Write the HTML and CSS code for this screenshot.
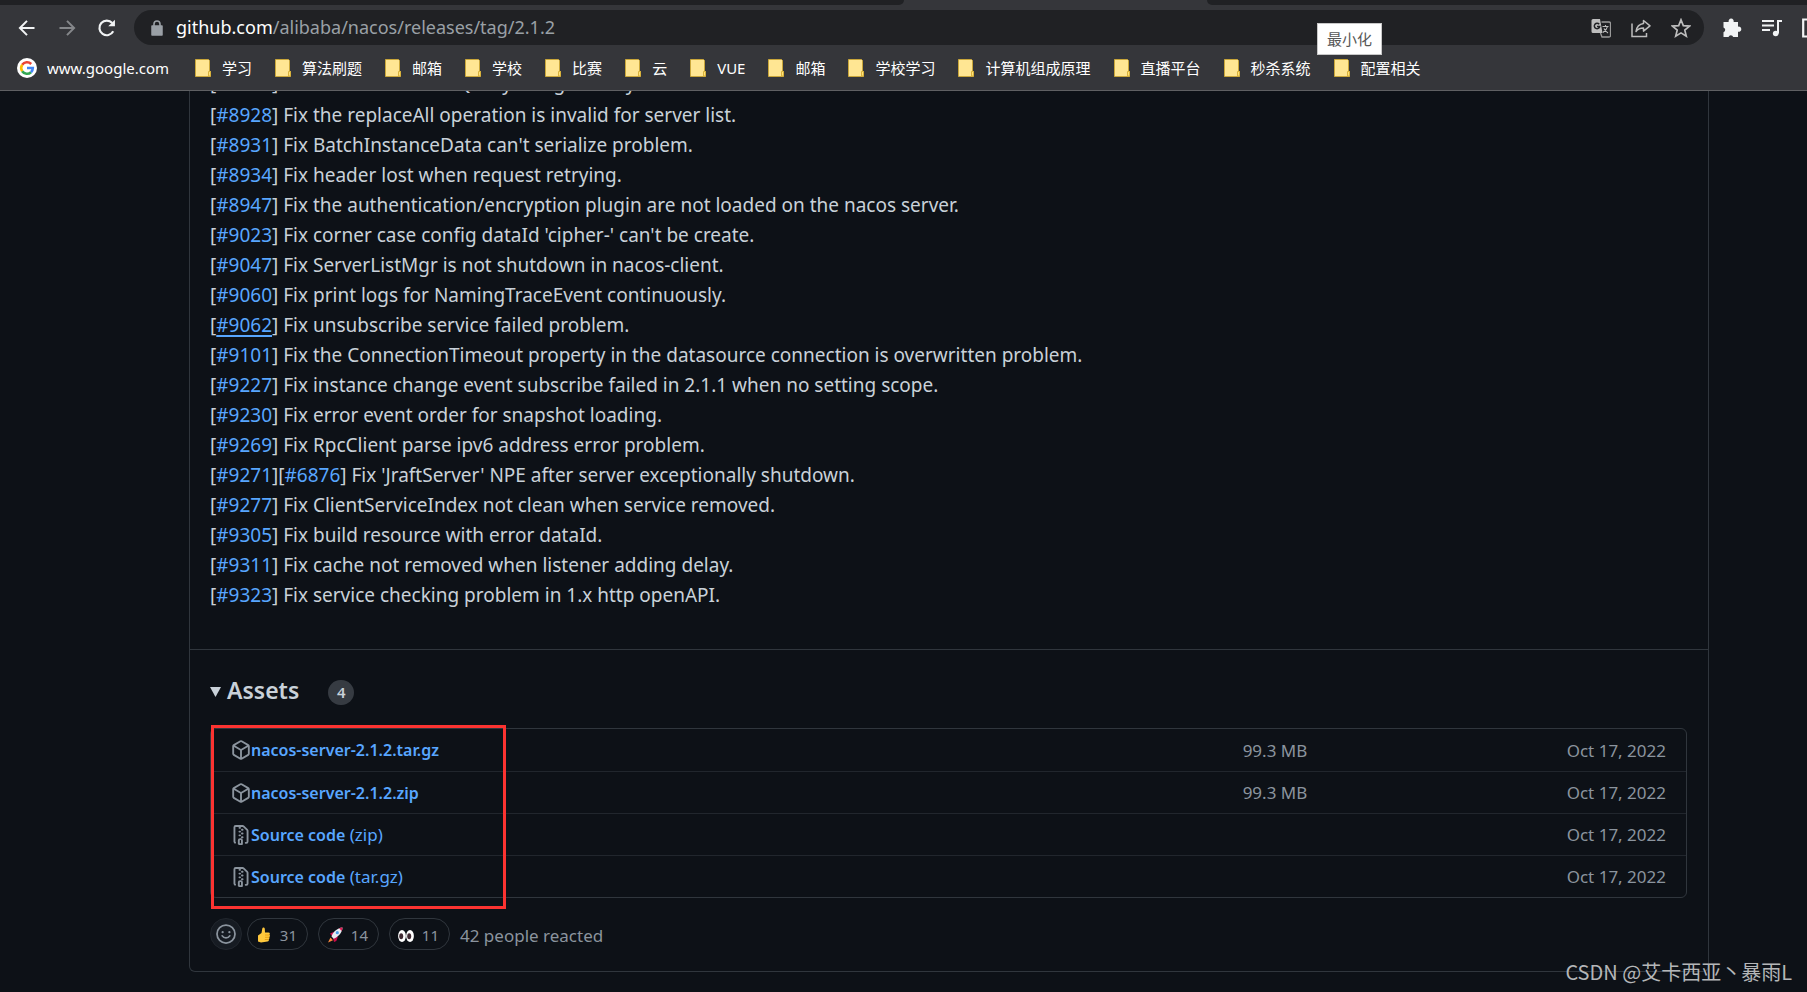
FILE: index.html
```
<!DOCTYPE html>
<html lang="zh-CN">
<head>
<meta charset="utf-8">
<title>Release 2.1.2 · alibaba/nacos</title>
<link rel="stylesheet" href="styles.css">
</head>
<body>
<svg class="defs" aria-hidden="true">
  <symbol id="folder" viewBox="0 0 16 18"><path d="M.5.5h13l1 1v11h1v5H.5z" fill="#ffe693" stroke="#c9a63a"/><path d="M13.500 17v-4.500h2V17z" fill="#ffe27a" stroke="#d9b23c"/></symbol>
  <symbol id="package" viewBox="0 0 16 16"><path fill-rule="evenodd" d="M8.878.392a1.750 1.750 0 00-1.756 0l-5.250 3.045A1.750 1.750 0 001 4.951v6.098c0 .624.332 1.200.872 1.514l5.250 3.045a1.750 1.750 0 001.756 0l5.250-3.045c.54-.313.872-.89.872-1.514V4.951c0-.624-.332-1.200-.872-1.514L8.878.392zM7.875 1.690a.25.25 0 01.25 0l4.630 2.685L8 7.133 3.245 4.375l4.630-2.685zM2.500 5.677v5.372c0 .09.047.171.125.216l4.625 2.683V8.432L2.500 5.677zm6.250 8.271l4.625-2.683a.25.25 0 00.125-.216V5.677L8.750 8.432v5.516z"/></symbol>
  <symbol id="zip" viewBox="0 0 16 16"><path fill-rule="evenodd" d="M3.500 1.750a.25.25 0 01.25-.25h3a.75.75 0 000 1.500h.5a.75.75 0 000-1.500h2.086a.25.25 0 01.177.073l2.914 2.914a.25.25 0 01.073.177v8.586a.25.25 0 01-.25.25h-.5a.75.75 0 000 1.500h.5A1.750 1.750 0 0014 13.250V4.664c0-.464-.184-.909-.513-1.237L10.573.513A1.750 1.750 0 009.336 0H3.750A1.750 1.750 0 002 1.750v11.500c0 .649.353 1.214.874 1.515a.75.75 0 10.752-1.298.25.25 0 01-.126-.217V1.750zM8.750 3a.75.75 0 000 1.500h.5a.75.75 0 000-1.500h-.5zM6 5.250a.75.75 0 01.75-.75h.5a.75.75 0 010 1.500h-.5A.75.75 0 016 5.250zm2 1.500A.75.75 0 018.750 6h.5a.75.75 0 010 1.500h-.5A.75.75 0 018 6.750zm-1.250.75a.75.75 0 000 1.500h.5a.75.75 0 000-1.500h-.5zM8 9.750A.75.75 0 018.750 9h.5a.75.75 0 010 1.500h-.5A.75.75 0 018 9.750zm-.75.75a1.750 1.750 0 00-1.750 1.750v3c0 .414.336.75.75.75h2.500a.75.75 0 00.75-.75v-3a1.750 1.750 0 00-1.750-1.750h-.5zM7 12.250a.25.25 0 01.25-.25h.5a.25.25 0 01.25.25v2.250H7v-2.250z"/></symbol>
</svg>

<header class="browser">
  <div class="tabs"><span class="tab-left"></span><span class="tab-right"></span></div>
  <div class="toolbar">
    <button class="nav" aria-label="Back"><svg viewBox="0 0 24 24" fill="none" stroke="#f1f3f4" stroke-width="2.400"><path d="M21 12H4M12 3.500 3.500 12l8.500 8.500"/></svg></button>
    <button class="nav" aria-label="Forward"><svg viewBox="0 0 24 24" fill="none" stroke="#85878a" stroke-width="2.400"><path d="M3 12h17M12 3.500l8.500 8.500-8.500 8.500"/></svg></button>
    <button class="nav" aria-label="Reload"><svg viewBox="0 0 24 24" fill="none" stroke="#f1f3f4" stroke-width="2.600"><path d="M19.500 16A8.800 8.800 0 1 1 18.300 6"/><path d="M21.500 2v8h-8z" fill="#f1f3f4" stroke="none"/></svg></button>
    <div class="omnibox">
      <svg class="lock" viewBox="0 0 12 16"><path d="M1 6h10v9H1z" fill="#9aa0a6" stroke="#9aa0a6" stroke-linejoin="round" stroke-width="1.500"/><path d="M3 6V4a3 3 0 0 1 6 0v2" fill="none" stroke="#9aa0a6" stroke-width="1.600"/></svg>
      <span class="url"><span class="host">github.com</span>/alibaba/nacos/releases/tag/2.1.2</span>
      <button class="tool" aria-label="Translate"><svg viewBox="0 0 20 20"><path d="M2 1h7l2.500 14H2a1.500 1.500 0 0 1-1.500-1.500v-11A1.500 1.500 0 0 1 2 1z" fill="#bdbdbd"/><path d="M10.500 4H18a1.500 1.500 0 0 1 1.500 1.500v12A1.500 1.500 0 0 1 18 19h-7l-1.500-4" fill="none" stroke="#9a9a9a" stroke-width="1.300"/><path d="M8.200 6.300a2.700 2.700 0 1 0 .5 2.200H6" fill="none" stroke="#202124" stroke-width="1.500"/><path d="M11.500 8.500h6M14.500 7v1.500m2 0c-.5 2.500-2.500 4.500-4.500 6m1-4c1 2 2.500 3.500 4 4.500" fill="none" stroke="#bdbdbd" stroke-width="1.100"/></svg></button>
      <button class="tool" aria-label="Share"><svg viewBox="0 0 20 20" fill="none" stroke="#bdbdbd" stroke-width="1.500"><path d="M1 5.500v13h14.500V15"/><path d="M12.500 2.500 19 7.800l-6.500 5.300v-3c-3.500 0-5.700 1-7.500 3.400.7-4.500 3-7.300 7.500-7.900z" stroke-linejoin="round"/></svg></button>
      <button class="tool" aria-label="Bookmark"><svg viewBox="0 0 20 20" fill="none" stroke="#bdbdbd" stroke-width="1.700"><path d="m10 1.800 2.300 5.800 6.200.5-4.700 4 1.500 6.100-5.300-3.300-5.300 3.300 1.500-6.100-4.700-4 6.200-.5z"/></svg></button>
    </div>
    <button class="tool" aria-label="Extensions"><svg viewBox="0 0 20 20" fill="#f1f3f4"><path d="M2.500 4h4.200a2.600 2.600 0 1 1 4.900 0H16v4.700a2.600 2.600 0 1 1 0 5V19h-4.800a2.500 2.500 0 0 0-4.700 0H1.500v-4.700a2.600 2.600 0 0 0 0-4.900V4z"/></svg></button>
    <button class="tool" aria-label="Media"><svg viewBox="0 0 20 20" fill="none" stroke="#f1f3f4" stroke-width="2"><path d="M0 3h12M0 7.500h12M0 12h8M16 15.500V3h4"/><circle cx="13.700" cy="15.500" r="2.800" fill="#f1f3f4" stroke="none"/></svg></button>
    <button class="tool" aria-label="Side panel"><svg viewBox="0 0 20 20" fill="none" stroke="#f1f3f4" stroke-width="2.200"><path d="M1.200 1.500h17.500v17H1.200z"/></svg></button>
  </div>
  <nav class="bookmarks">
    <a class="site" href="#"><svg class="google" viewBox="0 0 20 20"><circle cx="10" cy="10" r="10" fill="#fff"/><g fill="none" stroke-width="2.600"><path d="M5.200 6.800A5.800 5.800 0 0 1 14.200 6" stroke="#ea4335"/><path d="M5.200 13.200a5.800 5.800 0 0 1 0-6.400" stroke="#fbbc05"/><path d="M14 14.200a5.800 5.800 0 0 1-8.800-1" stroke="#34a853"/><path d="M10 10h5.800a5.800 5.800 0 0 1-1.800 4.200" stroke="#4285f4"/></g></svg>www.google.com</a>
    <a class="mark" href="#"><svg class="folder"><use href="#folder"/></svg>学习</a>
    <a class="mark" href="#"><svg class="folder"><use href="#folder"/></svg>算法刷题</a>
    <a class="mark" href="#"><svg class="folder"><use href="#folder"/></svg>邮箱</a>
    <a class="mark" href="#"><svg class="folder"><use href="#folder"/></svg>学校</a>
    <a class="mark" href="#"><svg class="folder"><use href="#folder"/></svg>比赛</a>
    <a class="mark" href="#"><svg class="folder"><use href="#folder"/></svg>云</a>
    <a class="mark" href="#"><svg class="folder"><use href="#folder"/></svg>VUE</a>
    <a class="mark" href="#"><svg class="folder"><use href="#folder"/></svg>邮箱</a>
    <a class="mark" href="#"><svg class="folder"><use href="#folder"/></svg>学校学习</a>
    <a class="mark" href="#"><svg class="folder"><use href="#folder"/></svg>计算机组成原理</a>
    <a class="mark" href="#"><svg class="folder"><use href="#folder"/></svg>直播平台</a>
    <a class="mark" href="#"><svg class="folder"><use href="#folder"/></svg>秒杀系统</a>
    <a class="mark" href="#"><svg class="folder"><use href="#folder"/></svg>配置相关</a>
  </nav>
  <div class="tip" role="tooltip">最小化</div>
</header>

<main class="page">
  <article class="release">
    <ul class="notes">
      <li>[<a href="#">#8922</a>] Fix failed to handle QueryString directly</li>
      <li>[<a href="#">#8928</a>] Fix the replaceAll operation is invalid for server list.</li>
      <li>[<a href="#">#8931</a>] Fix BatchInstanceData can't serialize problem.</li>
      <li>[<a href="#">#8934</a>] Fix header lost when request retrying.</li>
      <li>[<a href="#">#8947</a>] Fix the authentication/encryption plugin are not loaded on the nacos server.</li>
      <li>[<a href="#">#9023</a>] Fix corner case config dataId 'cipher-' can't be create.</li>
      <li>[<a href="#">#9047</a>] Fix ServerListMgr is not shutdown in nacos-client.</li>
      <li>[<a href="#">#9060</a>] Fix print logs for NamingTraceEvent continuously.</li>
      <li>[<a class="active" href="#">#9062</a>] Fix unsubscribe service failed problem.</li>
      <li>[<a href="#">#9101</a>] Fix the ConnectionTimeout property in the datasource connection is overwritten problem.</li>
      <li>[<a href="#">#9227</a>] Fix instance change event subscribe failed in 2.1.1 when no setting scope.</li>
      <li>[<a href="#">#9230</a>] Fix error event order for snapshot loading.</li>
      <li>[<a href="#">#9269</a>] Fix RpcClient parse ipv6 address error problem.</li>
      <li>[<a href="#">#9271</a>][<a href="#">#6876</a>] Fix 'JraftServer' NPE after server exceptionally shutdown.</li>
      <li>[<a href="#">#9277</a>] Fix ClientServiceIndex not clean when service removed.</li>
      <li>[<a href="#">#9305</a>] Fix build resource with error dataId.</li>
      <li>[<a href="#">#9311</a>] Fix cache not removed when listener adding delay.</li>
      <li>[<a href="#">#9323</a>] Fix service checking problem in 1.x http openAPI.</li>
    </ul>
    <section class="assets">
      <h3 class="assets-head"><span class="caret"></span>Assets<span class="count">4</span></h3>
      <div class="asset-wrap">
        <ul class="asset-list">
          <li class="asset"><a href="#"><svg class="icon"><use href="#package"/></svg><b>nacos-server-2.1.2.tar.gz</b></a><span>99.3 MB</span><time>Oct 17, 2022</time></li>
          <li class="asset"><a href="#"><svg class="icon"><use href="#package"/></svg><b>nacos-server-2.1.2.zip</b></a><span>99.3 MB</span><time>Oct 17, 2022</time></li>
          <li class="asset"><a href="#"><svg class="icon"><use href="#zip"/></svg><b>Source code</b>&nbsp;(zip)</a><span></span><time>Oct 17, 2022</time></li>
          <li class="asset"><a href="#"><svg class="icon"><use href="#zip"/></svg><b>Source code</b>&nbsp;(tar.gz)</a><span></span><time>Oct 17, 2022</time></li>
        </ul>
        <div class="highlight"></div>
      </div>
      <div class="reactions">
        <button class="smiley" aria-label="Add reaction"><svg viewBox="0 0 16 16" fill="none" stroke="#8b949e" stroke-width="1.400"><circle cx="8" cy="8" r="7.200"/><path d="M5 9.500c1.300 2.200 4.700 2.200 6 0" stroke-linecap="round"/><circle cx="5.300" cy="6.500" r=".9" fill="#8b949e" stroke="none"/><circle cx="10.700" cy="6.500" r=".9" fill="#8b949e" stroke="none"/></svg></button>
        <button class="pill" aria-label="Thumbs up"><svg viewBox="0 0 16 16"><path d="M2 8.500 5.500 6 6.300 1.500C6.500.3 8.500.2 8.800 1.800L9 5.500h3.500c1.500 0 1.800 1.800.8 2.300 1 .5.800 2-.2 2.300.8.600.5 1.900-.4 2.200.5.800 0 2.200-1.200 2.200l-6.500 1-3-1z" fill="#ffc83d"/><path d="M9 8h4M9 10.300h4M8.800 12.500h3.500" stroke="#e08f00" stroke-width=".7"/></svg>31</button>
        <button class="pill" aria-label="Rocket"><svg viewBox="0 0 16 16"><path d="M3 6.500 6.500 5l4.300 5-1.500 4-2.300 1-1-4.500z" fill="#ca0b4a"/><path d="M4.500 9.500C6 5 10 1 15.500.5 15.300 6 11 10 6.700 11.700z" fill="#e8eaf0"/><path d="M12 1.200C13 .8 14.200.5 15.500.5c0 1.300-.3 2.500-.7 3.500z" fill="#e01d55"/><circle cx="10.300" cy="5.700" r="1.600" fill="#4e9ee8"/><path d="M3.500 10.500 1 15.500l5-2.300z" fill="#ff8a3d"/></svg>14</button>
        <button class="pill" aria-label="Eyes"><svg viewBox="0 0 16 16"><ellipse cx="4" cy="9" rx="3.900" ry="6" fill="#fff"/><ellipse cx="12" cy="9" rx="3.900" ry="6" fill="#fff"/><ellipse cx="3.200" cy="9.200" rx="2" ry="3" fill="#402a32"/><ellipse cx="11.200" cy="9.200" rx="2" ry="3" fill="#402a32"/></svg>11</button>
        <span class="people">42 people reacted</span>
      </div>
    </section>
  </article>
</main>
<div class="watermark">CSDN @艾卡西亚丶暴雨L</div>
</body>
</html>
```
FILE: styles.css
```
* { box-sizing: border-box; }
body {
  margin: 0;
  min-height: 100vh;
  display: flex;
  flex-direction: column;
  overflow-x: hidden;
  background: #0d1117;
  color: #c9d1d9;
  font-family: "Noto Sans", "Noto Sans CJK SC", sans-serif;
}
button { border: 0; padding: 0; background: none; font: inherit; color: inherit; }
a { color: #58a6ff; text-decoration: none; }
ul { list-style: none; margin: 0; padding: 0; }
svg { display: block; flex: none; }
.defs { position: absolute; width: 0; height: 0; }

.browser { position: relative; background: #35363a; border-bottom: 1px solid #5f6063; }
.tabs { display: flex; justify-content: space-between; height: 5px; }
.tab-left { width: 50%; background: #202124; border-bottom-right-radius: 8px; }
.tab-right { width: 33.2%; background: #202124; border-bottom-left-radius: 8px; }
.toolbar { display: flex; align-items: center; height: 45px; padding-left: 17px; gap: 20px; overflow: hidden; }
.nav { flex: none; }
.nav svg { width: 20px; height: 20px; }
.omnibox {
  flex: 1;
  display: flex;
  align-items: center;
  gap: 20px;
  height: 35px;
  margin: 0 -2px 0 -3px;
  padding: 0 13px 0 17px;
  border-radius: 18px;
  background: #202124;
}
.lock { width: 12px; height: 16px; }
.url { flex: 1; margin-left: -7px; font-size: 18px; line-height: 24px; padding-bottom: 2px; color: #9aa0a6; }
.host { color: #fff; }
.tool { flex: none; }
.tool svg { width: 20px; height: 20px; }
.toolbar > .tool:last-child { width: 5px; overflow: hidden; }

.bookmarks { display: flex; align-items: center; gap: 23px; height: 40px; padding: 0 17px 4px; font: 15px/20px "Noto Sans", "Noto Sans CJK SC", sans-serif; white-space: nowrap; }
.bookmarks a { display: flex; align-items: center; color: #fff; }
.site { gap: 10px; padding-right: 3px; }
.mark { gap: 11px; }
.google { width: 20px; height: 20px; }
.folder { width: 16px; height: 18px; }
.tip {
  position: absolute;
  left: 1317px;
  top: 23px;
  padding: 4px 9px;
  border: 1px solid #c8c8c8;
  background: #fff;
  color: #575757;
  font: 15px/22px "Noto Sans CJK SC", sans-serif;
}

.page { padding: 0 98px 21px 189px; overflow: hidden; }
.release { border: 1px solid #30363d; border-top: 0; border-radius: 0 0 6px 6px; }
.notes { margin-top: -23px; padding: 0 20px 39px; font-size: 19px; line-height: 30px; }
.notes li:first-child { padding-bottom: 2px; }
.notes .active { text-decoration: underline; text-decoration-thickness: 2px; text-underline-offset: 3px; }
.assets { padding: 24px 21px 21px 20px; border-top: 1px solid #30363d; }
.assets-head { display: flex; align-items: center; margin: 0 0 22px; font-size: 23px; line-height: 32px; font-weight: 600; }
.caret { width: 11px; height: 10px; margin: 4px 6px 0 0; background: #c9d1d9; clip-path: polygon(0 0, 100% 0, 50% 100%); }
.count { display: grid; place-items: center; width: 26px; height: 25px; margin: 4px 0 0 29px; border-radius: 13px; background: #363b42; font-size: 15px; line-height: 24px; }
.asset-wrap { position: relative; }
.asset-list { border: 1px solid #30363d; border-radius: 6px; font-size: 17px; }
.asset { display: grid; grid-template-columns: 2fr 1fr 1fr; align-items: center; height: 42px; padding: 0 20px; color: #8b949e; text-align: right; }
.asset + .asset { border-top: 1px solid #21262d; }
.asset a { display: flex; align-items: center; }
.asset b { font-size: 16px; font-weight: 600; }
.icon { width: 20px; height: 20px; fill: #8b949e; }
.highlight { position: absolute; left: 1px; top: -3px; width: 295px; height: 184px; border: 3px solid #fb3331; }
.reactions { display: flex; align-items: center; margin-top: 20px; gap: 10px; color: #8b949e; }
.smiley { display: grid; place-items: center; width: 32px; height: 32px; margin-right: -5px; border: 1px solid #21262d; border-radius: 50%; background: #161b22; }
.smiley svg { width: 20px; height: 20px; }
.pill { display: flex; align-items: center; justify-content: space-between; width: 61px; height: 32px; padding: 2px 10px 0 8px; border: 1px solid #30363d; border-radius: 16px; font-size: 15px; }
.pill svg { width: 16px; height: 16px; }
.people { padding-top: 4px; font-size: 17px; line-height: 24px; }
.watermark {
  position: absolute;
  right: 15px;
  bottom: 6px;
  color: #b4b6b8;
  font: 20px/28px "Noto Sans CJK SC", sans-serif;
}
```
